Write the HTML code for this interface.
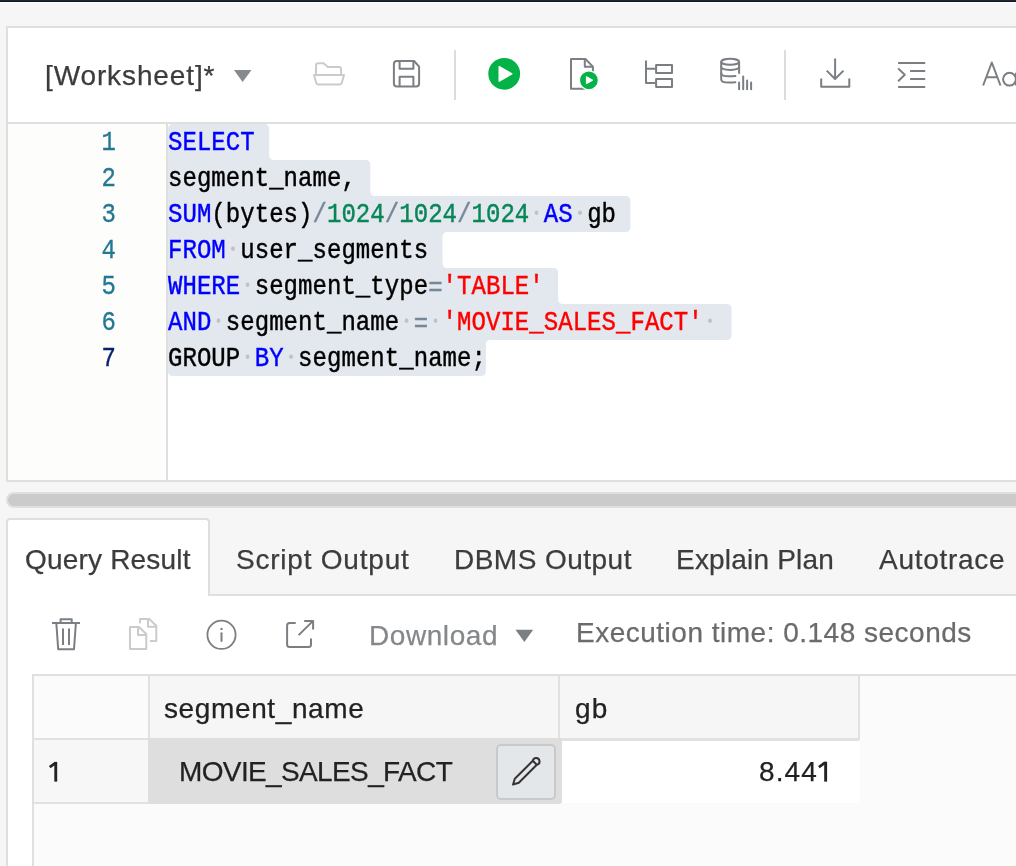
<!DOCTYPE html>
<html><head><meta charset="utf-8">
<style>
*{box-sizing:border-box;margin:0;padding:0}
html,body{width:1016px;height:866px;overflow:hidden;background:#f6f6f6;position:relative;font-family:"Liberation Sans",sans-serif}
.a{position:absolute}
.sans{will-change:transform;-webkit-text-stroke:0.25px;font-family:"Liberation Sans",sans-serif;font-size:28px;white-space:pre;line-height:1}
.code{will-change:transform;-webkit-text-stroke:0.4px;font-family:"Liberation Mono",monospace;font-size:24px;letter-spacing:0.048px;white-space:pre;line-height:36px;color:#000;transform:scaleY(1.125);transform-origin:0 8px}
.kw{color:#0000ff}.num{color:#098658}.str{color:#ff0000}.op{color:#778899}.eq{position:relative;top:1.5px}
.ws{color:transparent;-webkit-text-stroke:0;background:radial-gradient(circle at 50% 11.7px,#bfc3c7 1.6px,rgba(191,195,199,0) 2.3px)}
.ln{will-change:transform;-webkit-text-stroke:0.3px;font-family:"Liberation Mono",monospace;font-size:24px;color:#237893;line-height:36px;text-align:right;width:40px;transform:scaleY(1.125);transform-origin:0 8px}
</style></head><body>
<!-- top dark bar -->
<div class="a" style="left:0;top:0;width:1016px;height:2px;background:linear-gradient(#1f2835 0,#1f2835 1px,#0e1723 1px,#0e1723 2px)"></div>
<div class="a" style="left:0;top:2px;width:1016px;height:1px;background:#ffffff"></div>

<!-- worksheet panel -->
<div class="a" style="left:6px;top:26px;width:1012px;height:456px;border:2px solid #dde0df;border-right:none;background:#fff"></div>
<!-- toolbar bottom border -->
<div class="a" style="left:8px;top:122px;width:1010px;height:2px;background:#dde0df"></div>
<!-- gutter -->
<div class="a" style="left:8px;top:124px;width:158px;height:356px;background:#fdfdfc"></div>
<div class="a" style="left:166px;top:124px;width:2px;height:356px;background:#dde0df"></div>

<!-- editor -->
<svg class="a" style="left:0;top:0" width="1016" height="866"><path d="M168,129 Q168,124 173,124 L264.15,124 Q269.15,124 269.15,129 L269.15,155 Q269.15,160 274.15,160 L365.29999999999995,160 Q370.29999999999995,160 370.29999999999995,165 L370.29999999999995,191 Q370.29999999999995,196 375.29999999999995,196 L625.4,196 Q630.4,196 630.4,201 L630.4,227 Q630.4,232 625.4,232 L447.55,232 Q442.55,232 442.55,237 L442.55,263 Q442.55,268 447.55,268 L553.15,268 Q558.15,268 558.15,273 L558.15,299 Q558.15,304 563.15,304 L726.55,304 Q731.55,304 731.55,309 L731.55,335 Q731.55,340 726.55,340 L490.9,340 Q485.9,340 485.9,345 L485.9,371 Q485.9,376 480.9,376 L173,376 Q168,376 168,371 Z" fill="#e3e8ef"/></svg>
<div class="a code" style="left:168px;top:124px"><span class="kw">SELECT</span></div>
<div class="a code" style="left:168px;top:160px">segment_name,</div>
<div class="a code" style="left:168px;top:196px"><span class="kw">SUM</span>(bytes)<span class="op">/</span><span class="num">1024</span><span class="op">/</span><span class="num">1024</span><span class="op">/</span><span class="num">1024</span><span class="ws">·</span><span class="kw">AS</span><span class="ws">·</span>gb</div>
<div class="a code" style="left:168px;top:232px"><span class="kw">FROM</span><span class="ws">·</span>user_segments</div>
<div class="a code" style="left:168px;top:268px"><span class="kw">WHERE</span><span class="ws">·</span>segment_type<span class="op eq">=</span><span class="str">'TABLE'</span></div>
<div class="a code" style="left:168px;top:304px"><span class="kw">AND</span><span class="ws">·</span>segment_name<span class="ws">·</span><span class="op eq">=</span><span class="ws">·</span><span class="str">'MOVIE_SALES_FACT'</span><span class="ws">·</span></div>
<div class="a code" style="left:168px;top:340px">GROUP<span class="ws">·</span><span class="kw">BY</span><span class="ws">·</span>segment_name;</div>
<div class="a ln" style="left:76px;top:124px">1</div>
<div class="a ln" style="left:76px;top:160px">2</div>
<div class="a ln" style="left:76px;top:196px">3</div>
<div class="a ln" style="left:76px;top:232px">4</div>
<div class="a ln" style="left:76px;top:268px">5</div>
<div class="a ln" style="left:76px;top:304px">6</div>
<div class="a ln" style="left:76px;top:340px;color:#0b216f">7</div>
<!-- toolbar text -->
<div class="a sans" style="left:45px;top:62px;color:#3c3c3c;letter-spacing:0.88px">[Worksheet]*</div>

<!-- splitter -->
<div class="a" style="left:6px;top:492px;width:1016px;height:16px;border-radius:8px;background:#cbcbcb;border:2px solid #dfdfdf"></div>

<!-- tab bar -->
<div class="a" style="left:6px;top:594px;width:1010px;height:2px;background:#dde0df"></div>
<div class="a" style="left:6px;top:518px;width:204px;height:78px;background:#fff;border:2px solid #dde0df;border-bottom:none;border-radius:4px 4px 0 0"></div>
<!-- results panel -->
<div class="a" style="left:6px;top:596px;width:1010px;height:270px;background:#fff;border-left:2px solid #dde0df"></div>


<!-- tabs text -->
<div class="a sans" style="left:25px;top:546px;color:#3c3c3c;letter-spacing:0.19px">Query Result</div>
<div class="a sans" style="left:236px;top:546px;color:#3c3c3c;letter-spacing:0.78px">Script Output</div>
<div class="a sans" style="left:454px;top:546px;color:#3c3c3c;letter-spacing:0.47px">DBMS Output</div>
<div class="a sans" style="left:676px;top:546px;color:#3c3c3c;letter-spacing:0.2px">Explain Plan</div>
<div class="a sans" style="left:879px;top:546px;color:#3c3c3c;letter-spacing:0.71px">Autotrace</div>
<!-- results toolbar text -->
<div class="a sans" style="left:369px;top:622px;color:#85888b;letter-spacing:0.57px">Download</div>
<div class="a sans" style="left:575.5px;top:619px;color:#6b6b6b;letter-spacing:0.5px">Execution time: 0.148 seconds</div>
<!-- table -->
<div class="a" style="left:32px;top:674px;width:984px;height:192px;background:#fbfbfb;border-top:2px solid #e0e0e0;border-left:2px solid #dfe0df"></div>
<div class="a" style="left:150px;top:676px;width:408px;height:62px;background:#f6f6f6"></div>
<div class="a" style="left:148px;top:676px;width:2px;height:127px;background:#e0e1e0"></div>
<div class="a" style="left:558px;top:676px;width:2px;height:62px;background:#e0e1e0"></div>
<div class="a" style="left:560px;top:676px;width:300px;height:65px;background:#f6f6f6;border-right:2px solid #e0e1e0;border-bottom:3px solid #e0e1e0;border-bottom-right-radius:3px"></div>
<div class="a" style="left:34px;top:738px;width:526px;height:2px;background:#e0e1e0"></div>
<div class="a" style="left:34px;top:740px;width:114px;height:62px;background:#f7f7f7"></div>
<div class="a" style="left:34px;top:802px;width:116px;height:2px;background:#e0e1e0"></div>
<div class="a" style="left:148px;top:738px;width:414px;height:66px;background:#dedede;border-bottom-right-radius:3px"></div>
<div class="a" style="left:562px;top:741px;width:298px;height:62px;background:#ffffff"></div>
<div class="a" style="left:496px;top:744px;width:60px;height:56px;background:#e4e7ea;border:2px solid #c9c9c9;border-radius:5px"></div>
<div class="a sans" style="left:164px;top:695px;color:#222;letter-spacing:0.62px">segment_name</div>
<div class="a sans" style="left:574.5px;top:695px;color:#222;letter-spacing:1.2px">gb</div>
<svg class="a" style="left:0;top:0" width="1016" height="866"><rect x="54.3" y="761.9" width="2.9" height="19.7" fill="#222"/><path d="M49.7,767.2 L55.6,762.9" stroke="#222" stroke-width="2.7" stroke-linecap="butt"/></svg>
<div class="a sans" style="left:179px;top:758px;color:#222;letter-spacing:-0.63px">MOVIE_SALES_FACT</div>
<div class="a sans" style="left:758.5px;top:758px;color:#222;letter-spacing:1.1px">8.44</div>
<svg class="a" style="left:0;top:0" width="1016" height="866"><rect x="824.2" y="761.7" width="2.9" height="19.9" fill="#222"/><path d="M818.9,767.1 L825,762.7" stroke="#222" stroke-width="2.7"/></svg>
<svg class="a" style="left:0;top:0" width="1016" height="866">
<g fill="none" stroke="#333" stroke-width="2" stroke-linejoin="round">
<path d="M532.8,760.8 L514.8,778.8 L513.05,784.55 L518.8,782.8 L536.8,764.8 A3.4,3.4 0 1 0 532.8,760.8 Z"/>
<path d="M532.8,760.8 L536.8,764.8"/>
</g>
</svg>
<!-- full page svg overlay for icons -->
<svg class="a" style="left:0;top:0" width="1016" height="866" viewBox="0 0 1016 866">
<g fill="none" stroke-width="2" stroke-linecap="butt" stroke-linejoin="round">
<!-- dropdown triangle -->
<path d="M234,70 H251.5 L242.6,82 Z" fill="#868a8d" stroke="none"/>
<!-- folder -->
<g stroke="#c9cbcd">
<path d="M316,75 V65.2 Q316,63.2 318,63.2 H323.5 L327.8,67 H339 Q341,67 341,69 V75"/>
<path d="M314,75 H344 L341.8,82.8 Q341.3,84.6 339.3,84.6 H318.7 Q316.7,84.6 316.2,82.8 Z"/>
</g>
<!-- save -->
<g stroke="#7b7f83">
<path d="M396.9,61 H414.1 L419.1,66.7 V83.5 Q419.1,86.5 416.1,86.5 H396.9 Q393.9,86.5 393.9,83.5 V64 Q393.9,61 396.9,61 Z"/>
<path d="M399.6,61 V68.8 H413.4 V61"/>
<path d="M399.6,86.5 V76.8 H413.4 V86.5"/>
</g>
<rect x="454" y="50" width="2" height="50" fill="#dcdcdc" stroke="none"/>
<!-- run -->
<circle cx="504.2" cy="73.8" r="15.9" fill="#04b347" stroke="none"/>
<path d="M499.2,66.5 L511.8,73.8 L499.2,81.1 Z" fill="#fff" stroke="#fff" stroke-width="1.4"/>
<!-- run script -->
<g stroke="#7b7f83">
<path d="M571,59 H585.4 L592.9,66.6 V88.8 H571 Z"/>
<path d="M584.8,59 V66.7 H593"/>
</g>
<circle cx="588.9" cy="80.3" r="9.45" fill="#04b347" stroke="#fff" stroke-width="1.2"/>
<path d="M586.4,76.6 L592.8,80.2 L586.4,83.8 Z" fill="#fff" stroke="#fff" stroke-width="1"/>
<!-- explain -->
<g stroke="#7b7f83">
<path d="M646,60.4 V82.9 H655.5 M646,68.8 H655.5"/>
<rect x="656.1" y="64.9" width="15.9" height="8.1"/>
<rect x="656.1" y="78.9" width="15.9" height="8.1"/>
</g>
<!-- autotrace -->
<g stroke="#7b7f83" stroke-linecap="round">
<ellipse cx="730.15" cy="61.8" rx="8.95" ry="3"/>
<path d="M721.2,62 V79.5 Q721.2,82.6 728.5,82.6 Q733,82.6 735.4,82.2"/>
<path d="M739.1,62 V73.1"/>
<path d="M721.2,66.8 Q721.2,69.9 730.15,69.9 Q739.1,69.9 739.1,66.8"/>
<path d="M721.2,73.2 Q721.2,76.3 728.5,76.3 Q733,76.3 735.4,76"/>
<path d="M739.1,82.6 V89.3 M743.2,76.6 V89.3 M747.1,80.6 V89.3 M751.1,82.6 V89.3"/>
</g>
<rect x="784" y="50" width="2" height="50" fill="#dcdcdc" stroke="none"/>
<!-- download -->
<g stroke="#7b7f83">
<path d="M835.1,58.6 V79 M826.7,70.6 L835.1,79 L843.5,70.6"/>
<path d="M821.2,78.5 V86.8 H849.3 V78.5"/>
</g>
<!-- indent -->
<g stroke="#7b7f83">
<path d="M898.1,63 H925.2 M910.1,71.1 H925.2 M910.1,79.1 H925.2 M898.1,86.9 H925.2"/>
<path d="M898.1,68.4 L904.8,74.8 L898.1,81.2"/>
</g>
<!-- Aa -->
<g stroke="#7b7f83">
<path d="M983.1,85.5 L991.8,62.5 L1000.5,85.5 M986.2,77.2 H997.4"/>
<circle cx="1009.5" cy="79.2" r="6.4"/>
<path d="M1016,72.8 V85.5"/>
</g>

<!-- results toolbar -->
<g stroke="#7b7f83">
<path d="M52,623 H80"/>
<path d="M60.6,622 V619.2 H71.7 V622"/>
<path d="M56.3,623 L58.2,649.2 H74 L75.9,623"/>
<path d="M63,628.5 V645 M69,628.5 V645"/>
</g>
<g stroke="#c9cbcd">
<path d="M130,627 V649 H146.3 V633.9 L138.9,627 Z"/>
<path d="M138,627 V635.1 H146.3"/>
<path d="M140,623.3 V619 H149.2 L156.3,625.7 V641 H149.8"/>
<path d="M148,619 V626.8 H156.3"/>
</g>
<g stroke="#7b7f83">
<circle cx="221.5" cy="634.8" r="14.1" stroke-width="1.8"/>
<path d="M221.5,633.2 V641" stroke-linecap="round"/>
</g>
<circle cx="221.5" cy="628.9" r="1.2" fill="#7b7f83" stroke="none"/>
<g stroke="#7b7f83">
<path d="M295.7,622.9 H289.6 Q287.1,622.9 287.1,625.4 V644.4 Q287.1,646.9 289.6,646.9 H308.5 Q311,646.9 311,644.4 V638.4"/>
<path d="M298.6,635.1 L313.1,620.9 M304.2,620.9 H313.1 V629.5"/>
</g>
<path d="M515.5,629.7 H533.2 L524.35,641.9 Z" fill="#7c7f82" stroke="none"/>
</g>
</svg>
</body></html>
